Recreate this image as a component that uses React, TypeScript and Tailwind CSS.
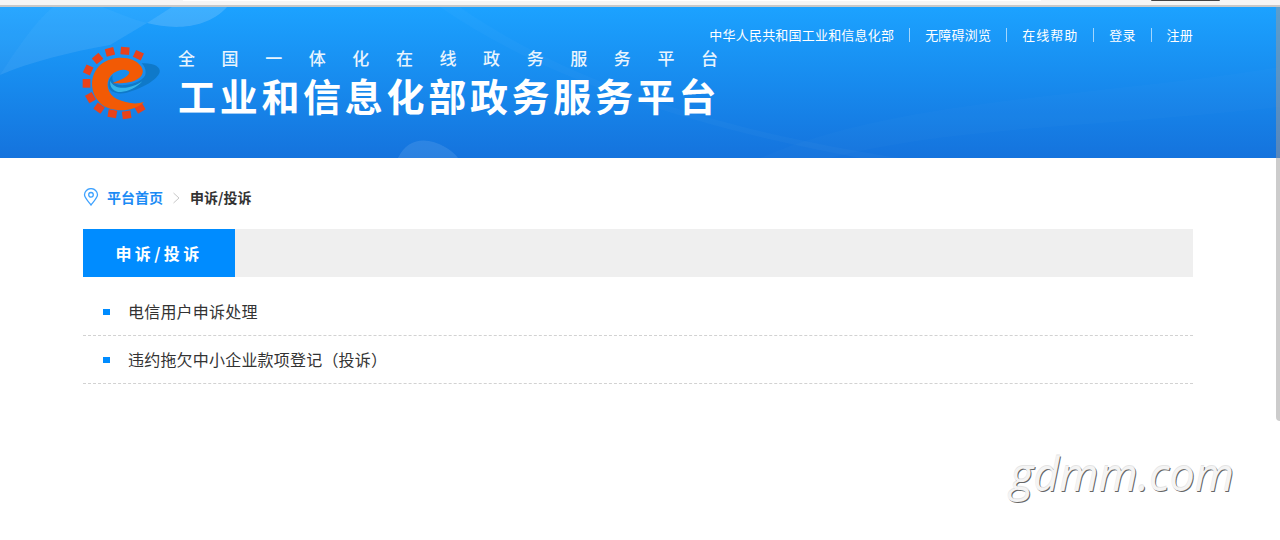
import React from 'react';

const cjk = "font-['Noto_Sans_CJK_SC','Noto_Sans',sans-serif]";

const topLinks = ['中华人民共和国工业和信息化部', '无障碍浏览', '在线帮助', '登录', '注册'];
const items = ['电信用户申诉处理', '违约拖欠中小企业款项登记（投诉）'];

// gear teeth, centre x/y and angle
const teeth = [
  [105, 36, -15], [150, 33, 5], [190, 46, 25], [68, 56, -40], [40, 90, -65], [35, 130, -90],
  [46, 173, 60], [72, 205, 35], [112, 222, 10], [155, 225, -8], [195, 205, -30],
];

const Logo = () => (
  <svg width="95" height="85" viewBox="0 0 285 255" className="-ml-[8px] shrink-0">
    <g fill="#e8421a">
      {teeth.map(([x, y, a]) => (
        <rect key={x} x={x - 13} y={y - 12} width="26" height="23" transform={`rotate(${a} ${x} ${y})`} />
      ))}
    </g>
    <path d="M200 70 C235 68 258 80 254 97 C248 118 205 145 155 158 C125 165 100 155 100 135 C100 122 105 112 113 105 C108 125 122 138 150 135 C180 132 212 118 212 98 C212 86 208 78 200 70 Z" fill="#0f79c9" />
    <path d="M106 122 C112 140 135 147 160 142 C175 139 190 132 202 124 C185 142 160 155 138 156 C118 157 102 142 106 122 Z" fill="#36b4ea" />
    <path d="M207 186 C175 218 110 218 78 192 C42 160 42 103 78 73 C115 43 178 48 199 80 C212 100 195 118 170 125 C150 130 125 130 112 130 C135 120 163 110 163 97 C158 85 125 87 107 107 C89 130 98 163 127 178 C150 188 180 195 207 186 Z" fill="#f25a05" />
  </svg>
);

const Banner = () => (
  <svg className="absolute inset-0 h-full w-full" viewBox="0 0 1280 151" preserveAspectRatio="none">
    <path d="M0 68 C18 40 35 15 53 0 H103 C118 6 132 12 147 16 C170 22 205 24 227 0 H103 L0 0 Z" fill="#ffffff" fillOpacity="0.06" />
    <path d="M0 68 C18 40 35 15 53 0 H103 C118 6 132 12 147 16 L110 38 C70 45 30 55 0 68 Z" fill="#ffffff" fillOpacity="0.09" />
    <path d="M147 16 C170 22 205 24 227 0 H172 Z" fill="#ffffff" fillOpacity="0.1" />
    <path d="M398 151 C408 130 428 130 445 140 C452 144 456 148 458 151 Z" fill="#ffffff" fillOpacity="0.1" />
    <path d="M460 0 C560 70 700 120 900 151 H860 C690 120 540 70 440 0 Z" fill="#ffffff" fillOpacity="0.025" />
    <path d="M760 151 C900 90 1100 90 1280 60 V100 C1100 120 950 120 830 151 Z" fill="#ffffff" fillOpacity="0.015" />
  </svg>
);

export default function App() {
  return (
    <div className={`relative h-[540px] overflow-hidden bg-white ${cjk}`}>
      {/* strip of the browser chrome above the page */}
      <div className="flex h-[7px] border-b-2 border-[#c8c8c8] bg-[#f5f5f5]">
        <div className="ml-[183px] h-[1px] w-[858px] bg-white" />
        <div className="ml-[110px] h-[1px] w-[69px] rounded-b bg-[#444]" />
      </div>

      <header className="relative h-[151px] bg-gradient-to-b from-[#1ca2ff] to-[#1573dd]">
        <Banner />
        <div className="relative ml-[83px] flex h-full w-[1110px] items-start">
          <div className="mt-[33px] flex items-start gap-[9px]">
            <Logo />
            <div className="-ml-[1px] mt-[5px] text-white">
              <div className="w-[540px] text-[17px] font-medium leading-[25px] [text-align-last:justify] opacity-90">全国一体化在线政务服务平台</div>
              <div className="whitespace-nowrap text-[38px] font-bold leading-[49px] tracking-[3.7px]">工业和信息化部政务服务平台</div>
            </div>
          </div>
          <nav className="absolute right-0 top-[20px] flex items-center text-[13px] leading-[16px] tracking-[0.2px] text-white">
            {topLinks.map((t, i) => (
              <React.Fragment key={t}>
                {i > 0 && <span className="mx-[15px] h-[14px] w-px bg-white/60" />}
                <a className={i === 2 ? 'tracking-[1px]' : ''}>{t}</a>
              </React.Fragment>
            ))}
          </nav>
        </div>
      </header>

      <main className="ml-[83px] w-[1110px]">
        <div className="flex h-[71px] items-center pt-[8px] text-[14px] font-bold">
          <svg width="16" height="18" viewBox="0 0 16 18" fill="none" stroke="#3ea2ff" strokeWidth="1.3" className="-mt-[2px] mr-[8px]">
            <path d="M8 17 C4 12 1.5 9.5 1.5 6.8 A6.5 6.2 0 0 1 14.5 6.8 C14.5 9.5 12 12 8 17 Z" />
            <circle cx="8" cy="6.8" r="2.3" />
          </svg>
          <a className="text-[#1c8bf5]">平台首页</a>
          <svg width="9" height="12" viewBox="0 0 9 12" fill="none" stroke="#c8c8c8" className="mx-[9px]">
            <path d="M1.5 1 L7 6 L1.5 11" />
          </svg>
          <span className="text-[#333]">申诉/投诉</span>
        </div>

        <div className="h-[48px] bg-[#efefef]">
          <div className="flex h-full w-[152px] items-center justify-center bg-[#008cff] text-[16px] font-bold tracking-[3.4px] text-white">
            申诉/投诉
          </div>
        </div>

        <ul className="mt-[11px]">
          {items.map((t) => (
            <li key={t} className="flex h-[48px] items-center border-b border-dashed border-[#d2d2d2] pl-[20px] text-[16px] tracking-[0.2px] text-[#333]">
              <span className="mr-[18px] h-[6px] w-[7px] bg-[#008cff]" />
              <span className="pb-[2px]">{t}</span>
            </li>
          ))}
        </ul>
      </main>

      {/* page scrollbar, overlaps the edge */}
      <div className="absolute right-0 top-[7px] h-[414px] w-[4px] rounded-bl bg-[#999]/50" />

      {/* site watermark */}
      <div className="absolute left-[1010px] top-[444px] font-['Open_Sans',sans-serif] text-[45px] italic leading-[60px] text-[#f4f4f4] [text-shadow:1px_1px_0_#666,0_-1px_0_#e4e4e4]">
        gdmm.com
      </div>
    </div>
  );
}
